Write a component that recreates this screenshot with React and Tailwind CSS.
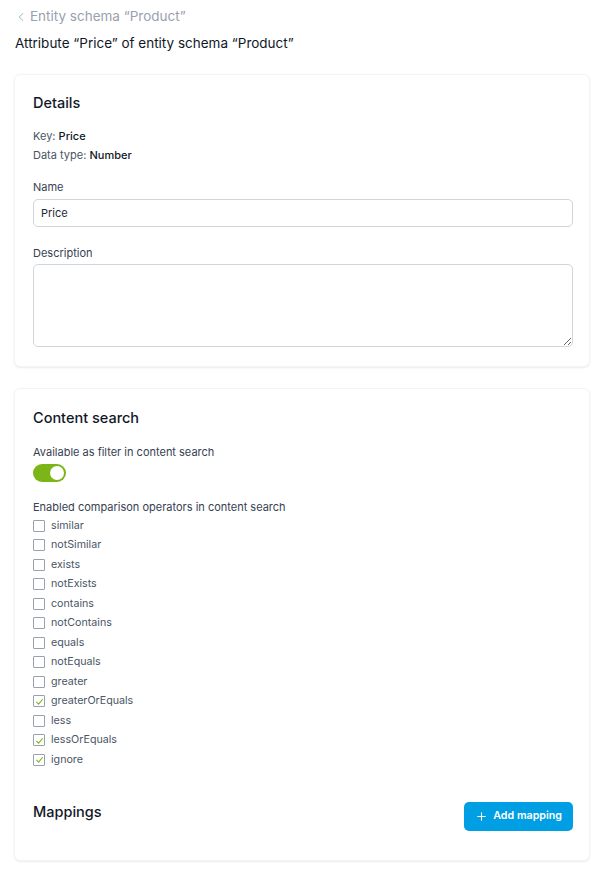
import { Plus, ChevronLeft } from 'lucide-react'

const OPERATORS = [
  ['similar', false],
  ['notSimilar', false],
  ['exists', false],
  ['notExists', false],
  ['contains', false],
  ['notContains', false],
  ['equals', false],
  ['notEquals', false],
  ['greater', false],
  ['greaterOrEquals', true],
  ['less', false],
  ['lessOrEquals', true],
  ['ignore', true],
]

function Card({ children, className = '' }) {
  return (
    <div className={`bg-white rounded-md border border-gray-100 shadow-[0_1px_2px_rgba(0,0,0,0.08)] pl-[18px] pr-[16px] ${className}`}>
      {children}
    </div>
  )
}

function Checkbox({ label, checked }) {
  return (
    <label className="flex items-center gap-[6px] h-[19.5px]">
      <span className="w-3 h-3 border border-gray-400 rounded-[1px] bg-white flex items-center justify-center">
        {checked && (
          <svg width="9" height="9" viewBox="0 0 10 10" fill="none">
            <path d="M1.5 5.5 L4 8 L8.5 2.5" stroke="#7cb518" strokeWidth="1.2" />
          </svg>
        )}
      </span>
      <span className="text-[10.7px] text-gray-600">{label}</span>
    </label>
  )
}

export default function App() {
  return (
    <div className="bg-white min-h-screen pl-[15px] pr-[8px] pb-4 text-gray-900" style={{ fontFamily: 'Inter, "Noto Sans", sans-serif' }}>
      <div className="pt-[5px] flex items-center text-[13.5px] text-gray-400 h-[20px] mt-[4px]">
        <ChevronLeft size={14} strokeWidth={1.5} className="-ml-[1px] mr-[2px]" />
        <span>Entity schema “Product”</span>
      </div>
      <h1 className="mt-[9px] text-[13.5px] font-normal text-gray-900 leading-[20px]">Attribute “Price” of entity schema “Product”</h1>

      <Card className="mt-[21px] pt-[18px] pb-[19px] -ml-[1px]">
        <h2 className="text-[14.5px] font-medium leading-[20px]">Details</h2>
        <div className="mt-[14px] text-[11px] text-gray-600 leading-[19px]">
          <div>Key: <span className="font-medium text-gray-900">Price</span></div>
          <div>Data type: <span className="font-medium text-gray-900">Number</span></div>
        </div>
        <div className="mt-[15px] text-[11px] text-gray-700 leading-[14px]">Name</div>
        <input
          defaultValue="Price"
          className="mt-[5px] w-full h-[28px] rounded-[5px] border border-gray-300 px-[7px] text-[11px] text-gray-800 outline-none"
        />
        <div className="mt-[19px] text-[11px] text-gray-700 leading-[14px]">Description</div>
        <textarea className="mt-[4px] block w-full h-[83px] rounded-[5px] border border-gray-300 px-[7px] py-1 text-[11px] outline-none" />
      </Card>

      <Card className="mt-[21px] pt-[19px] pb-[29px] -ml-[1px]">
        <h2 className="text-[14.5px] font-medium leading-[20px]">Content search</h2>
        <div className="mt-[17px] text-[11px] text-gray-700 leading-[14px]">Available as filter in content search</div>
        <div className="mt-[5px] w-[33px] h-[18px] rounded-full bg-[#7cb518] flex items-center justify-end pr-[2px]">
          <span className="w-[14px] h-[14px] rounded-full bg-white" />
        </div>
        <div className="mt-[18px] text-[11px] text-gray-700 leading-[14px]">Enabled comparison operators in content search</div>
        <div className="mt-[2px] flex flex-col">
          {OPERATORS.map(([name, checked]) => (
            <Checkbox key={name} label={name} checked={checked} />
          ))}
        </div>
        <div className="mt-[32px] flex items-start justify-between">
          <h2 className="text-[14.5px] font-medium leading-[20px]">Mappings</h2>
          <button className="h-[29px] px-[11px] rounded-[5px] bg-[#009fe3] text-white text-[10.7px] font-semibold flex items-center gap-[5px]">
            <Plus size={13} strokeWidth={2} />
            Add mapping
          </button>
        </div>
      </Card>
    </div>
  )
}
